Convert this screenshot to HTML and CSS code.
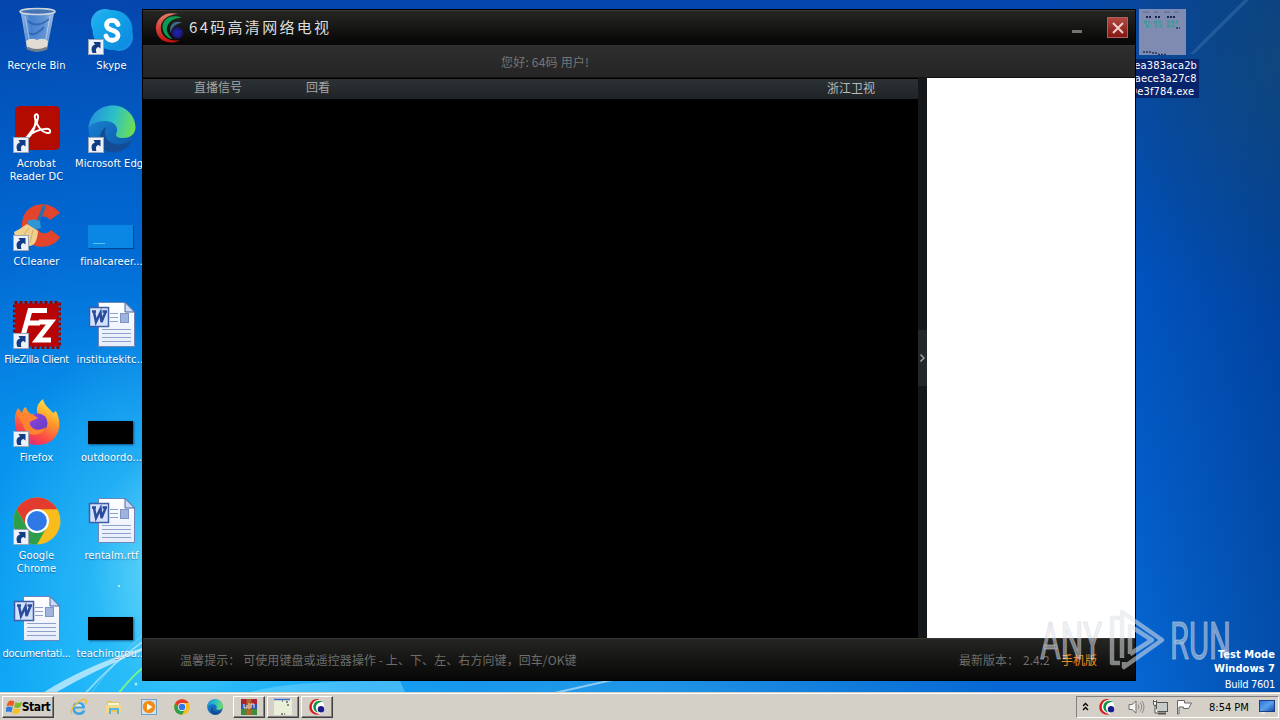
FILE: index.html
```
<!DOCTYPE html>
<html lang="zh-CN">
<head>
<meta charset="utf-8">
<title>64码高清网络电视</title>
<link rel="stylesheet" href="styles.css">
</head>
<body>

<!-- Shared icons -->
<svg class="defs" width="0" height="0">
    <defs>
        <linearGradient id="gBin" x1="0" x2="1"><stop offset="0" stop-color="#c3d8ee"/><stop offset=".3" stop-color="#5f94d8"/><stop offset=".7" stop-color="#7fabe0"/><stop offset="1" stop-color="#d8e4f0"/></linearGradient>
        <linearGradient id="gSkype" x1="0" y1="0" x2="1" y2="1"><stop offset="0" stop-color="#1bb4f0"/><stop offset="1" stop-color="#0a86dc"/></linearGradient>
        <linearGradient id="gEdgeTop" x1="0" y1=".4" x2="1" y2=".6"><stop offset="0" stop-color="#2390dc"/><stop offset=".5" stop-color="#2cc0c8"/><stop offset="1" stop-color="#6fe052"/></linearGradient>
        <linearGradient id="gEdge" x1="0" y1="0" x2="1" y2="1"><stop offset="0" stop-color="#1a8ad8"/><stop offset="1" stop-color="#0d50a4"/></linearGradient>
        <linearGradient id="gFox" x1=".8" y1="0" x2=".3" y2="1"><stop offset="0" stop-color="#fff04a"/><stop offset=".4" stop-color="#ff9a2a"/><stop offset=".75" stop-color="#fb4a48"/><stop offset="1" stop-color="#e0247c"/></linearGradient>
        <linearGradient id="gFoxIn" x1="0" y1="0" x2="1" y2="1"><stop offset="0" stop-color="#9a45e0"/><stop offset="1" stop-color="#5a3cc0"/></linearGradient>
        <linearGradient id="gPage" x1="0" y1="0" x2="0" y2="1"><stop offset="0" stop-color="#fff"/><stop offset="1" stop-color="#e6ecfa"/></linearGradient>
        <linearGradient id="gRed" x1="0" y1="0" x2="0" y2="1"><stop offset="0" stop-color="#e87a68"/><stop offset="1" stop-color="#c0100c"/></linearGradient>
        <linearGradient id="gScreen" x1="0" y1="0" x2="1" y2="1"><stop offset="0" stop-color="#2a70d8"/><stop offset=".5" stop-color="#5aa0ec"/><stop offset="1" stop-color="#1248a8"/></linearGradient>
        <radialGradient id="gBlue"><stop offset="0" stop-color="#2222b4"/><stop offset=".6" stop-color="#1c1c84"/><stop offset="1" stop-color="#14143c" stop-opacity=".4"/></radialGradient>
    </defs>

    <symbol id="shortcut" viewBox="0 0 16 16">
        <rect x=".5" y=".5" width="15" height="15" fill="#eef2f8" stroke="#9aa6b8"/>
        <path d="M4.500 14C2.500 9 4 6.500 7 5.500L5.500 3H12.500V9.500L10.500 8C8 8.500 7.500 11 8.500 14Z" fill="#123c84"/>
    </symbol>

    <symbol id="bin" viewBox="0 0 48 48">
        <path d="M7.500 4L14 42Q24 47 34 42L41.500 4Z" fill="url(#gBin)" fill-opacity=".75"/>
        <path d="M12 9L17 37M37 9L32 37" stroke="#d8e8f8" stroke-opacity=".6" fill="none"/>
        <path d="M15 14Q24 22 36 12M16 26Q22 30 31 20" stroke="#1c54ac" stroke-opacity=".6" stroke-width="2" fill="none"/>
        <path d="M13 34Q18 30 24 33Q30 30 35 34L34 41Q24 46 14 41Z" fill="#e3dcd2"/>
        <path d="M14 41Q24 46 34 41" stroke="#707c8c" stroke-width="3" fill="none"/>
        <ellipse cx="24.500" cy="4.500" rx="17.500" ry="3" fill="#4474b4" stroke="#cdd5dc" stroke-width="1.600"/>
    </symbol>

    <symbol id="skype" viewBox="0 0 48 48">
        <circle cx="17" cy="16" r="14" fill="#28acee"/>
        <circle cx="31" cy="30" r="14" fill="#1590e2"/>
        <circle cx="24.500" cy="23" r="20" fill="url(#gSkype)"/>
        <path d="M30 17.500C28 12 18.500 12 18.500 18C18.500 25 30 21.500 30 28.500C30 34.500 19.500 35 18 29" stroke="#fff" stroke-width="4.800" fill="none" stroke-linecap="round"/>
    </symbol>

    <symbol id="acrobat" viewBox="0 0 48 48">
        <rect x="2" y="1" width="45" height="44" rx="5" fill="#b30b00"/>
        <path d="M13 35C19 30 24 20 22 13C20.500 8 26 8 25 13C24 22 13 32 11 36M22 13C24 20 28 27 34 28C39 29 38 23 32 24C26 24 18 28 13 33" stroke="#fff" stroke-width="2" fill="none"/>
    </symbol>

    <symbol id="edge" viewBox="0 0 48 48">
        <circle cx="24" cy="24" r="23.500" fill="url(#gEdge)"/>
        <path d="M17 27C17 39 30 43 44 36C38 46 28 49 20 47C8 43 10 27 18 22Z" fill="#134c94"/>
        <path d="M.5 23C2 9 12 .5 25 .5C38 .5 47.500 11 47.500 22C47.500 30 41 33 35 33C29 33 27 31 28.500 28C31 22 26 16 17 16C9 16 3 19 .5 23Z" fill="url(#gEdgeTop)"/>
    </symbol>

    <symbol id="ccleaner" viewBox="0 0 48 48">
        <path d="M47 10C38-2 18-2 11 12C5 27 12 42 25 43.500C36 45 44 40 47 34L38 27C32 34 23 29 23.500 21C24 13 32 11 37 17Z" fill="#e2452c"/>
        <path d="M31 4L25 19" stroke="#2e6cab" stroke-width="3.500" stroke-linecap="round"/>
        <path d="M14 18Q20 15 27 18L28 25L18 28Z" fill="#2f95d4"/>
        <path d="M14 21Q7 26 1 29Q3 42 17 43Q24 42 25 28Z" fill="#efd08e"/>
        <path d="M16 25L9 34M20 27L17 40" stroke="#d4ac64"/>
    </symbol>

    <symbol id="filezilla" viewBox="0 0 48 48">
        <rect x="1.500" y="1.500" width="45" height="45" fill="none" stroke="#8e0303" stroke-width="3" stroke-dasharray="3 2"/>
        <rect x="2.500" y="2.500" width="43" height="43" fill="#b80404"/>
        <path d="M34 9.500H17L10 35M13 22H27M26 21H38L24 39H38" stroke="#fff" stroke-width="5" fill="none"/>
    </symbol>

    <symbol id="firefox" viewBox="0 0 48 48">
        <path d="M2 25C1 18 3 12 5 9L9 14Q10 9 13 8Q14 13 18 15L25 16C22 10 25 4 30 0C31 6 36 9 40 14L43 12C52 30 42 46 25 46C12 46 3 38 2 25Z" fill="url(#gFox)"/>
        <circle cx="25" cy="24" r="9.500" fill="url(#gFoxIn)"/>
        <path d="M4 15C11 13 17 14 22 17L25 19C22 21 18 21 16.500 24C18 31 26 33 33 28C30 36 19 38 14 33C10 29 10 23 4 15Z" fill="#ff8430"/>
    </symbol>

    <symbol id="chrome" viewBox="0 0 48 48">
        <circle cx="24" cy="24" r="23.500" fill="#f8bc1c"/>
        <path d="M3.650 12.250A23.500 23.500 0 0 1 44.350 12.250H24L14 29.500Z" fill="#e33b2e"/>
        <path d="M3.650 12.250A23.500 23.500 0 0 0 24 47.500L34 29.700L24 35.500L14 29.800Z" fill="#2f9e4a"/>
        <circle cx="24" cy="24" r="12" fill="#fff"/>
        <circle cx="24" cy="24" r="9.900" fill="#2f78e8"/>
    </symbol>

    <symbol id="word" viewBox="0 0 48 48">
        <path d="M10.500 1.500H37L46.500 11V45.500H10.500Z" fill="url(#gPage)" stroke="#6f86b8"/>
        <path d="M37 1.500V11H46.500Z" fill="#cddcf6" stroke="#48659e"/>
        <path d="M22 12.500H30M22 16.500H30M22 20.500H30M14 28.500H43M14 32.500H43M14 36.500H43M14 40.500H43" stroke="#8ea2ce"/>
        <rect x="32.500" y="12.500" width="8" height="9" fill="#9fb4dc" stroke="#7c93c4"/>
        <rect x="1.500" y="6.500" width="19" height="19" fill="#d4e1fa" stroke="#3f5ea6" stroke-width="1.500"/>
        <path d="M4 10.500H8M14.500 10.500H19M6 11L8 21L12.500 11.500L13.500 21L17.500 11" stroke="#2a4c9c" stroke-width="2.500" fill="none"/>
    </symbol>

    <symbol id="tv" viewBox="0 0 32 32">
        <path d="M24 1C8-3 0 8 1 17C2 28 14 34 26 28C15 30 6 25 6 15C6 8 13 1 24 1Z" fill="url(#gRed)"/>
        <path d="M28 5C15 0 6 8 8 17C9 22 13 26 18 27C13 22 11 18 13 13C16 7 22 5 28 5Z" fill="#0c9a50"/>
        <circle cx="23" cy="20.500" r="7" fill="url(#gBlue)"/>
        <path d="M28 10C20 7 14 12 16 21C17 15 21 11 28 10Z" fill="#3d6c8c"/>
    </symbol>

    <symbol id="tvSmall" viewBox="0 0 16 16">
        <circle cx="8" cy="8" r="7.500" fill="#fff"/>
        <path d="M10.500 .5C4-1.500 0 4 .3 9C1 14 6 17 11 15C6 14.500 2.800 12 2.800 8C2.800 4 6 .8 10.500 .5Z" fill="#d81c1c"/>
        <path d="M14 2.500C8 0 4 4 4.300 8.500C4.600 11 7 13.500 9 13.500C7.300 11.500 6.300 9 7.200 6.500C8.500 4 11 2.800 14 2.500Z" fill="#0c9444"/>
        <circle cx="12" cy="10.200" r="3.200" fill="#1c1c90"/>
    </symbol>

    <symbol id="flag" viewBox="0 0 16 16">
        <path d="M2 3Q5 .5 8.500 2.500L7 7.500Q4 5.500 .5 7.500Z" fill="#ee5a24"/>
        <path d="M9.500 3Q12.500 5 16 2.800L14.500 8Q11 10 8 8Z" fill="#7cba30"/>
        <path d="M.2 8.500Q3.500 6.500 6.700 8.500L5.300 13.500Q2 11.500-1.200 13.500Z" fill="#2c80d8"/>
        <path d="M7.700 9Q11 11 14.200 9.200L12.800 14Q9.500 16 6.300 14Z" fill="#fbc020"/>
    </symbol>
</svg>

<div class="desktop">

    <!-- Wallpaper light streaks -->
    <svg class="streaks" viewBox="0 0 1280 720" width="1280" height="720">
        <path d="M38 696Q80 668 142 648L142 651Q90 672 50 696Z" fill="#fff" fill-opacity=".6"/>
        <path d="M84 695Q110 665 145 640" stroke="#fff" stroke-opacity=".45" stroke-width="2" fill="none"/>
        <path d="M90 695Q118 655 146 632" stroke="#fff" stroke-opacity=".25" fill="none"/>
        <path d="M118 694Q132 676 145 666" stroke="#8aff70" stroke-opacity=".8" stroke-width="2" fill="none"/>
        <path d="M250 692Q290 680 400 681L405 692Z" fill="#9cecff" fill-opacity=".35"/>
        <path d="M550 694L612 680" stroke="#fff" stroke-opacity=".5" stroke-width="2"/>
        <path d="M1190 54L1244 0H1249L1194 54Z" fill="#7cb4e4" fill-opacity=".2"/>
        <circle cx="119" cy="586" r="1" fill="#d8fbff"/>
        <circle cx="136" cy="684" r="1.500" fill="#d8fbff" fill-opacity=".7"/>
    </svg>

    <div class="icons">
        <div class="icon"><div class="pic"><svg class="big"><use href="#bin"/></svg></div><p>Recycle Bin</p></div>
        <div class="icon"><div class="pic"><svg class="big"><use href="#skype"/></svg><svg class="arrow"><use href="#shortcut"/></svg></div><p>Skype</p></div>
        <div class="icon"><div class="pic"><svg class="big"><use href="#acrobat"/></svg><svg class="arrow"><use href="#shortcut"/></svg></div><p>Acrobat<br>Reader DC</p></div>
        <div class="icon"><div class="pic"><svg class="big"><use href="#edge"/></svg><svg class="arrow"><use href="#shortcut"/></svg></div><p>Microsoft Edge</p></div>
        <div class="icon"><div class="pic"><svg class="big"><use href="#ccleaner"/></svg><svg class="arrow"><use href="#shortcut"/></svg></div><p>CCleaner</p></div>
        <div class="icon"><div class="pic"><div class="thumb blue"></div></div><p>finalcareer...</p></div>
        <div class="icon"><div class="pic"><svg class="big"><use href="#filezilla"/></svg><svg class="arrow"><use href="#shortcut"/></svg></div><p class="tight">FileZilla Client</p></div>
        <div class="icon"><div class="pic"><svg class="big"><use href="#word"/></svg></div><p>institutekitc...</p></div>
        <div class="icon"><div class="pic"><svg class="big"><use href="#firefox"/></svg><svg class="arrow"><use href="#shortcut"/></svg></div><p>Firefox</p></div>
        <div class="icon"><div class="pic"><div class="thumb"></div></div><p>outdoordo...</p></div>
        <div class="icon"><div class="pic"><svg class="big"><use href="#chrome"/></svg><svg class="arrow"><use href="#shortcut"/></svg></div><p>Google<br>Chrome</p></div>
        <div class="icon"><div class="pic"><svg class="big"><use href="#word"/></svg></div><p>rentalm.rtf</p></div>
        <div class="icon"><div class="pic"><svg class="big"><use href="#word"/></svg></div><p class="tight">documentati...</p></div>
        <div class="icon"><div class="pic"><div class="thumb"></div></div><p>teachingrou...</p></div>
    </div>

    <!-- Selected exe file -->
    <div class="exe">
        <svg width="48" height="48" viewBox="0 0 48 48">
            <rect x="1" width="47" height="46" fill="#7f8bb0"/>
            <path d="M5 3H11M16 3H20M26 3H32M36 3H41" stroke="#5c6a90"/>
            <path d="M8 8H14M17 8H23M29 8H38" stroke="#18284c" stroke-width="2" stroke-dasharray="2 1"/>
            <path d="M6 13H12M16 13H25M29 13H40M8 17H13M17 17H25M29 17H38" stroke="#3c9c98" stroke-width="3" stroke-dasharray="3 1.500"/>
            <path d="M38 19H42M5 43H13M14 44H19M20 45.500H29" stroke="#26345c" stroke-width="1.500" stroke-dasharray="2 1"/>
        </svg>
        <p>9ea383aca2b<br>0aece3a27c8<br>9e3f784.exe</p>
    </div>

    <!-- TV player window -->
    <div class="window">
        <div class="titlebar">
            <svg class="logo"><use href="#tv"/></svg>
            <h1>64码高清网络电视</h1>
            <span class="minBtn"></span>
            <span class="closeBtn"><svg width="12" height="12" viewBox="0 0 12 12"><path d="M1 1L11 11M11 1L1 11" stroke="#f0d0cc" stroke-width="2"/></svg></span>
        </div>
        <div class="userbar">您好: 64码 用户!</div>
        <div class="content">
            <div class="player">
                <div class="tabs">
                    <span class="tab">直播信号</span>
                    <span class="tab">回看</span>
                    <span class="channel">浙江卫视</span>
                </div>
                <div class="video"></div>
            </div>
            <div class="splitter">
                <div class="handle"><svg width="6" height="8" viewBox="0 0 6 8"><path d="M.5 .5L4 4L.5 7.500" stroke="#9a9c9e" stroke-width="1.600" fill="none"/></svg></div>
            </div>
            <div class="list"></div>
        </div>
        <div class="footer">
            <span class="tip">温馨提示： 可使用键盘或遥控器操作 - 上、下、左、右方向键，回车/OK键</span>
            <span class="version">最新版本：</span>
            <span class="number">2.4.2</span>
            <span class="mobile">手机版</span>
        </div>
    </div>

    <svg class="watermark" width="200" height="70" viewBox="0 0 200 70">
        <g fill="#dfe3e8" fill-opacity=".5" stroke="#d0d5dc" stroke-opacity=".5" stroke-width="1.200">
            <text x="4" y="53" textLength="62" lengthAdjust="spacingAndGlyphs">ANY</text>
            <text x="134" y="53" textLength="61" lengthAdjust="spacingAndGlyphs">RUN</text>
        </g>
        <g fill="none" stroke="#dfe3e8" stroke-opacity=".55" stroke-width="4.500" stroke-linejoin="round">
            <path d="M84 12H76V57H84"/>
            <path d="M86 52V6L126 34L88 61V56M94 48V20L116 34L94 48"/>
        </g>
    </svg>

    <div class="build">
        <b>Test Mode</b>
        <b>Windows 7</b>
        <span>Build 7601</span>
    </div>
</div>

<div class="taskbar">
    <div class="start"><svg width="16" height="16"><use href="#flag"/></svg>Start</div>
    <div class="quick">
        <svg width="18" height="18" viewBox="0 0 18 18">
            <path d="M14.500 10.500H4.800Q5.500 14.500 9 14.500Q11.500 14.500 12.500 12.500H15.500Q14 17 9 17Q2.500 17 2.500 10.300Q2.500 4 9 4Q15 4 15 10Z" fill="#3ca4e4"/>
            <path d="M5 8.500H12Q11.500 6 8.500 6Q5.600 6 5 8.500Z" fill="#e4f0f8"/>
            <path d="M2 16Q-1 13 6 6Q13 0 16 2Q17 3 15.500 6" stroke="#f4bc30" stroke-width="1.400" fill="none"/>
        </svg>
        <svg width="18" height="18" viewBox="0 0 18 18">
            <path d="M2 3H7L8 4H15V14H2Z" fill="#ecc75c"/>
            <path d="M3 5H14V9H3Z" fill="#f8f4dc"/>
            <path d="M1 7H16V15H13V11H5V15H1Z" fill="#f2da84"/>
            <path d="M4 16V10H14V16H12V12H6V16Z" fill="#5fb0dc"/>
        </svg>
        <svg width="18" height="18" viewBox="0 0 18 18">
            <rect x="1.500" y="1.500" width="15" height="15" fill="#cfe2f2" stroke="#6fa0cc"/>
            <circle cx="9" cy="9" r="6.200" fill="#f48c14"/>
            <path d="M7 5.500L12.500 9L7 12.500Z" fill="#fff"/>
        </svg>
        <svg width="16" height="16"><use href="#chrome"/></svg>
        <svg width="16" height="16"><use href="#edge"/></svg>
    </div>
    <div class="task">
        <svg width="16" height="16" viewBox="0 0 16 16">
            <path d="M0 0H16V5H0Z" fill="#a82430"/>
            <path d="M0 5H16V10H0Z" fill="#3450b0"/>
            <path d="M0 10H16V16H0Z" fill="#3c8c3c"/>
            <path d="M5.500 0H10.500V16H5.500Z" fill="#b46428"/>
            <path d="M3 5V9H6V6M8 4V10M10 9V5H13V9" stroke="#f4ead8" fill="none"/>
        </svg>
    </div>
    <div class="task">
        <svg width="18" height="16" viewBox="0 0 18 16">
            <rect width="18" height="16" fill="#e9efd9"/>
            <path d="M0 .5H16" stroke="#3c6ccc" stroke-width="1.500"/>
            <path d="M8 2H9M12 3H14M13 6H15M7 15H9M10 15H11" stroke="#222"/>
        </svg>
    </div>
    <div class="task"><svg width="16" height="16"><use href="#tvSmall"/></svg></div>

    <div class="tray">
        <svg class="chevron" width="7" height="10" viewBox="0 0 7 10"><path d="M1 4L3.500 1.500L6 4M1 8L3.500 5.500L6 8" stroke="#000" stroke-width="1.300" fill="none"/></svg>
        <svg class="trayTv" width="16" height="16"><use href="#tvSmall"/></svg>
        <svg class="sound" width="17" height="16" viewBox="0 0 17 16">
            <path d="M1 5.500H4L8 2V14L4 10.500H1Z" fill="#f4f4f2" stroke="#70706c"/>
            <path d="M10 5.500Q12 8 10 10.500M12 3.500Q15.500 8 12 12.500M14 2Q18 8 14 14" stroke="#8c8c88" fill="none"/>
        </svg>
        <svg class="net" width="17" height="16" viewBox="0 0 17 16">
            <rect x="4.500" y="3.500" width="11" height="9" fill="#c8ccc8" stroke="#555"/>
            <path d="M6 14.500H14" stroke="#555" stroke-width="2"/>
            <path d="M1.500 1V5Q1.500 6.500 3 6.500Q4.500 6.500 4.500 5V1M1 2.500H5M3 6.500V14H6" stroke="#555" fill="#fff"/>
        </svg>
        <svg class="action" width="17" height="16" viewBox="0 0 17 16">
            <path d="M1.500 15V1.500H8.500V4H15.500L12.500 9.500H7.500V8H3V15Z" fill="#fff" stroke="#666"/>
        </svg>
        <span class="clock">8:54 PM</span>
        <svg class="screen" width="16" height="14" viewBox="0 0 16 14">
            <rect x=".5" y=".5" width="15" height="11" fill="url(#gScreen)" stroke="#1c3c84"/>
            <path d="M2 13H6" stroke="#e8f0ff" stroke-width="1.500"/>
        </svg>
    </div>
</div>

</body>
</html>
```

FILE: styles.css
```
* {
    box-sizing: border-box;
}

body {
    margin: 0;
    width: 1280px;
    height: 720px;
    overflow: hidden;
    font-family: "DejaVu Sans Condensed", "DejaVu Sans", sans-serif;
    font-size: 11px;
}

p, h1 {
    margin: 0;
}

svg {
    display: block;
    flex: none;
    overflow: visible;
}

.defs {
    position: absolute;
}

/* Desktop and wallpaper */
.desktop {
    position: relative;
    height: 692px;
    overflow: hidden;
    background:
        radial-gradient(ellipse 200px 260px at 190px 570px, rgba(150, 245, 255, 0.8), rgba(80, 215, 250, 0.35) 50%, transparent),
        radial-gradient(ellipse 560px 700px at 110px 700px, #14b0f8, rgba(8, 156, 244, 0.85) 40%, rgba(4, 130, 232, 0.5) 65%, transparent),
        radial-gradient(ellipse 700px 60px at 300px 692px, #3cc4f8, transparent),
        radial-gradient(ellipse 260px 260px at 1300px 60px, rgba(20, 75, 115, 0.75), transparent),
        linear-gradient(to right, transparent 1130px, rgba(0, 40, 110, 0.4)),
        linear-gradient(#0446ac, #0050bc 30%, #0668d4 100%);
}

.streaks {
    position: absolute;
    top: 0;
    left: 0;
}

/* Icon grid */
.icons {
    display: grid;
    grid-template-columns: 75px 75px;
    grid-auto-rows: 98px;
    width: 150px;
    padding-top: 7px;
}

.icon {
    position: relative;
    width: 73px;
    color: #fff;
    text-align: center;
    line-height: 13px;
    letter-spacing: 0.1px;
    text-shadow: 0 1px 1px rgba(0, 40, 100, 0.5);
    white-space: nowrap;
}

.icon .tight {
    letter-spacing: -0.3px;
}

.pic {
    position: relative;
    width: 48px;
    height: 48px;
    margin: 0 auto 4px 13px;
}

.big {
    width: 48px;
    height: 48px;
}

.arrow {
    position: absolute;
    left: 0;
    bottom: 0;
    width: 16px;
    height: 16px;
}

.thumb {
    position: absolute;
    bottom: 3px;
    left: 0;
    width: 45px;
    height: 23px;
    background: #000;
    box-shadow: 1px 1px 2px rgba(0, 30, 70, 0.6);
}

.thumb.blue {
    background: linear-gradient(#54c8f0, #54c8f0) 5px 18px / 12px 1px no-repeat, #0a86e4;
    box-shadow: 1px 1px 1px rgba(0, 50, 110, 0.6);
}

/* Selected exe */
.exe {
    position: absolute;
    left: 1126px;
    top: 9px;
    width: 73px;
    color: #fff;
    text-align: center;
    line-height: 13px;
}

.exe svg {
    margin-left: 12px;
}

.exe p {
    margin-top: 2px;
    background: #08246c;
    letter-spacing: 0.15px;
    white-space: nowrap;
}

/* Player window */
.window {
    position: absolute;
    left: 142px;
    top: 9px;
    display: flex;
    flex-direction: column;
    width: 994px;
    height: 672px;
    border: 1px solid #000;
    background: #000;
    font-family: "Noto Sans CJK SC", sans-serif;
    font-size: 12px;
}

.titlebar {
    display: flex;
    align-items: center;
    height: 35px;
    padding: 0 7px 0 12px;
    background: linear-gradient(#262623, #080808 90%);
    border-top: 1px solid #3a3a38;
}

.logo {
    width: 31px;
    height: 31px;
}

.titlebar h1 {
    flex: 1;
    margin: -3px 0 0 3px;
    color: #dedede;
    font-size: 15px;
    font-weight: normal;
    letter-spacing: 2.3px;
}

.minBtn {
    width: 10px;
    height: 3px;
    margin: 6px 25px 0 0;
    background: #73736f;
}

.closeBtn {
    display: flex;
    align-items: center;
    justify-content: center;
    width: 21px;
    height: 21px;
    margin-top: -1px;
    border: 1px solid #b06058;
    background: linear-gradient(#b04840, #841814);
}

.userbar {
    height: 33px;
    padding-left: 358px;
    border-top: 1px solid #333;
    border-bottom: 1px solid #111;
    background: linear-gradient(#2e2e2e, #252525);
    color: #777;
    letter-spacing: 0.2px;
    line-height: 31px;
}

.content {
    display: flex;
    flex: 1;
}

.player {
    display: flex;
    flex-direction: column;
    width: 775px;
}

.tabs {
    display: flex;
    height: 21px;
    padding: 0 43px 0 51px;
    border-top: 1px solid #000;
    background: linear-gradient(#2b3134, #202427);
    color: #a4a7a9;
    line-height: 16px;
}

.tab {
    margin-right: 64px;
}

.channel {
    margin-left: auto;
    color: #b6b9bb;
    line-height: 18px;
}

.video {
    flex: 1;
    background: #000;
}

.splitter {
    display: flex;
    align-items: center;
    width: 9px;
    background: #14181b;
}

.handle {
    display: flex;
    align-items: center;
    justify-content: center;
    width: 9px;
    height: 56px;
    background: #25282a;
}

.list {
    flex: 1;
    background: #fff;
}

.footer {
    display: flex;
    height: 42px;
    padding: 0 38px 0 37px;
    border-top: 1px solid #343432;
    background: linear-gradient(#252522, #060606);
    color: #6e6e6c;
    line-height: 41px;
    white-space: pre;
}

.tip {
    letter-spacing: 0.08px;
}

.version {
    margin-left: auto;
}

.number {
    width: 38px;
    margin-left: 4px;
}

.mobile {
    color: #f08c20;
}

/* Overlays */
.watermark {
    position: absolute;
    left: 1036px;
    top: 606px;
}

.watermark text {
    font-family: Roboto, sans-serif;
    font-size: 51px;
}

.build {
    position: absolute;
    right: 5px;
    bottom: -2px;
    display: flex;
    flex-direction: column;
    align-items: flex-end;
    color: #fff;
    line-height: 14px;
}

.build b {
    letter-spacing: 0.05px;
}

.build span {
    line-height: 18px;
    letter-spacing: -0.3px;
}

/* Taskbar */
.taskbar {
    display: flex;
    align-items: center;
    height: 28px;
    padding: 1px 1px 0 2px;
    border-top: 1px solid #d4d0c8;
    background: #d4d0c8;
    box-shadow: inset 0 1px #fff;
}

.start, .task {
    display: flex;
    align-items: center;
    justify-content: center;
    height: 22px;
    border: 1px solid;
    border-color: #fff #404040 #404040 #fff;
    box-shadow: inset -1px -1px #808080;
}

.start {
    width: 52px;
    gap: 0;
    font-size: 12px;
    font-weight: bold;
    letter-spacing: -0.4px;
}

.quick {
    display: flex;
    align-items: center;
    justify-content: space-between;
    width: 153px;
    margin: 0 10px 0 16px;
}

.task {
    width: 32px;
    margin-right: 2px;
}

.tray {
    display: flex;
    align-items: center;
    width: 203px;
    height: 22px;
    margin-left: auto;
    padding-left: 5px;
    border: 1px solid;
    border-color: #808080 #fff #fff #808080;
}

.trayTv {
    margin-left: 10px;
}

.sound {
    margin-left: 13px;
}

.net {
    margin-left: 7px;
}

.action {
    margin-left: 7px;
}

.clock {
    width: 42px;
    margin-left: 16px;
    white-space: nowrap;
}

.screen {
    margin-left: 8px;
}
```
